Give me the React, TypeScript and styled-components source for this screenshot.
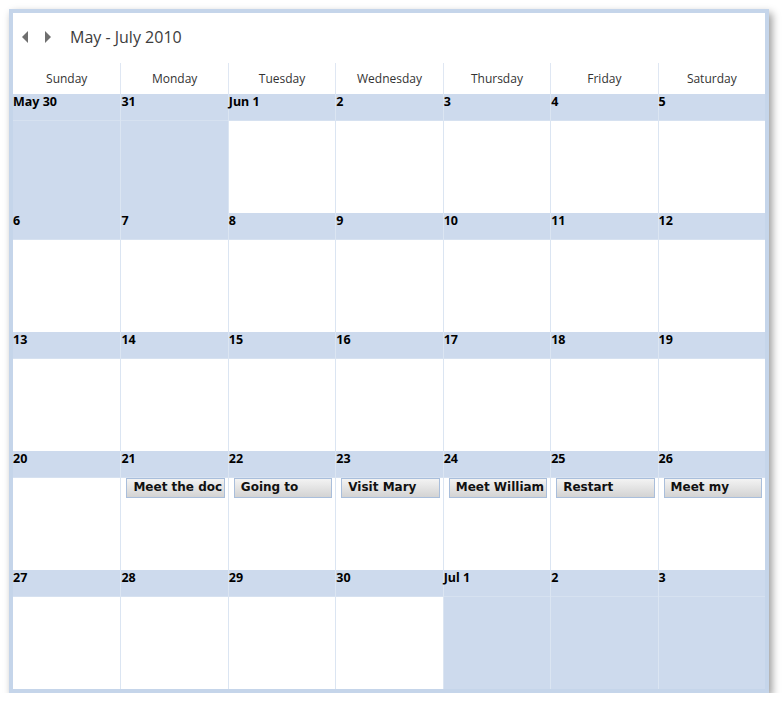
import React from 'react';
import styled, { createGlobalStyle } from 'styled-components';

const GlobalStyle = createGlobalStyle`
  html, body {
    margin: 0;
    padding: 0;
    background: #ffffff;
  }
  body {
    font-family: 'Open Sans', 'Noto Sans', sans-serif;
  }
`;

const Window = styled.div`
  margin: 9px 0 0 9px;
  width: 752px;
  border: 4px solid #c5d5ea;
  background: #ffffff;
  box-shadow: 3px 4px 8px rgba(0, 0, 0, 0.4);
`;

const Toolbar = styled.div`
  height: 50px;
  display: flex;
  align-items: center;
  padding-left: 9px;
  padding-bottom: 2px;
  box-sizing: border-box;
`;

const NavButton = styled.button`
  width: 18px;
  height: 20px;
  padding: 0;
  margin-right: 5px;
  border: none;
  background: transparent;
  display: flex;
  align-items: center;
  justify-content: flex-start;
  cursor: pointer;
`;

const Title = styled.div`
  margin-left: 2px;
  font-family: 'Open Sans', 'Noto Sans', sans-serif;
  font-size: 16px;
  color: #3c3c3c;
`;

const DayNames = styled.div`
  display: grid;
  grid-template-columns: repeat(7, 1fr);
  height: 31px;
`;

const DayName = styled.div<{ $first?: boolean }>`
  display: flex;
  align-items: center;
  justify-content: center;
  font-family: 'Open Sans', 'Noto Sans', sans-serif;
  font-size: 12px;
  color: #333333;
  border-left: ${(p) => (p.$first ? 'none' : '1px solid #dfe7f3')};
`;

const WeekRow = styled.div`
  display: grid;
  grid-template-columns: repeat(7, 1fr);
  height: 119px;
`;

const Cell = styled.div<{ $first?: boolean; $outside?: boolean }>`
  display: flex;
  flex-direction: column;
  border-left: ${(p) => (p.$first ? 'none' : '1px solid #dbe5f2')};
  background: ${(p) => (p.$outside ? '#cddaed' : '#ffffff')};
  min-width: 0;
`;

const Band = styled.div`
  height: 27px;
  background: #cddaed;
  border-bottom: 1px solid #d6e1f0;
  box-sizing: border-box;
  padding: 0;
  font-family: 'Noto Sans', 'Open Sans', sans-serif;
  font-weight: 700;
  font-size: 12.5px;
  line-height: 16px;
  color: #000000;
`;

const Body = styled.div`
  flex: 1;
  display: flex;
  flex-direction: column;
`;

const Appointment = styled.div`
  margin: 0 3px 0 5px;
  height: 20px;
  box-sizing: border-box;
  border: 1px solid #a9bedb;
  background: linear-gradient(#f3f3f3, #d3d3d3);
  padding: 0 0 0 6px;
  font-family: 'DejaVu Sans', Verdana, sans-serif;
  font-weight: 700;
  font-size: 12px;
  line-height: 16px;
  color: #111111;
  overflow: hidden;
`;

const Arrow = ({ dir }: { dir: 'left' | 'right' }) => (
  <svg width="6" height="12" viewBox="0 0 6 12">
    {dir === 'left' ? (
      <polygon points="6,0 6,12 0,6" fill="#6f6f6f" />
    ) : (
      <polygon points="0,0 0,12 6,6" fill="#6f6f6f" />
    )}
  </svg>
);

type Day = { label: string; outside?: boolean; appt?: string };

const days = ['Sunday', 'Monday', 'Tuesday', 'Wednesday', 'Thursday', 'Friday', 'Saturday'];

const weeks: Day[][] = [
  [
    { label: 'May 30', outside: true },
    { label: '31', outside: true },
    { label: 'Jun 1' },
    { label: '2' },
    { label: '3' },
    { label: '4' },
    { label: '5' },
  ],
  ['6', '7', '8', '9', '10', '11', '12'].map((label) => ({ label })),
  ['13', '14', '15', '16', '17', '18', '19'].map((label) => ({ label })),
  [
    { label: '20' },
    { label: '21', appt: 'Meet the doc' },
    { label: '22', appt: 'Going to lunch' },
    { label: '23', appt: 'Visit Mary tomorrow' },
    { label: '24', appt: 'Meet William' },
    { label: '25', appt: 'Restart computer' },
    { label: '26', appt: 'Meet my parents' },
  ],
  [
    { label: '27' },
    { label: '28' },
    { label: '29' },
    { label: '30' },
    { label: 'Jul 1', outside: true },
    { label: '2', outside: true },
    { label: '3', outside: true },
  ],
];

export default function App() {
  return (
    <>
      <GlobalStyle />
      <Window>
        <Toolbar>
          <NavButton aria-label="Previous">
            <Arrow dir="left" />
          </NavButton>
          <NavButton aria-label="Next">
            <Arrow dir="right" />
          </NavButton>
          <Title>May - July 2010</Title>
        </Toolbar>
        <DayNames>
          {days.map((d, i) => (
            <DayName key={d} $first={i === 0}>
              {d}
            </DayName>
          ))}
        </DayNames>
        {weeks.map((week, w) => (
          <WeekRow key={w}>
            {week.map((day, i) => (
              <Cell key={i} $first={i === 0} $outside={day.outside}>
                <Band>{day.label}</Band>
                <Body>{day.appt && <Appointment>{day.appt}</Appointment>}</Body>
              </Cell>
            ))}
          </WeekRow>
        ))}
      </Window>
    </>
  );
}
